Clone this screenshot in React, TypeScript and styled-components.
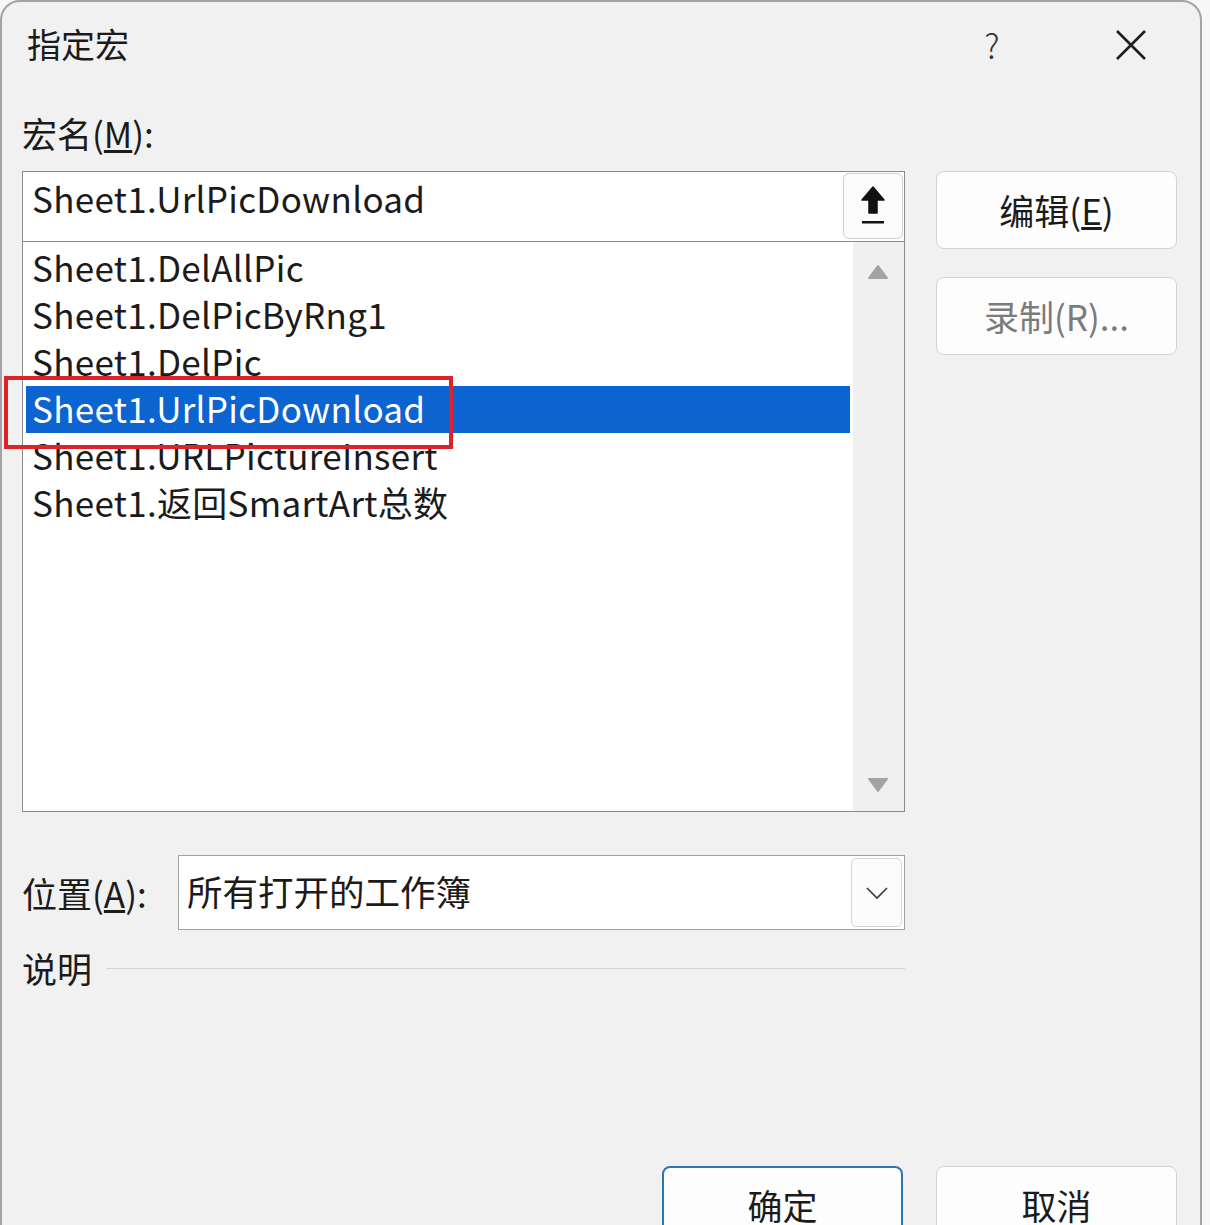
import React from "react";
import styled, { createGlobalStyle } from "styled-components";

const Global = createGlobalStyle`
  html, body { margin: 0; padding: 0; background: #f7f7f7; overflow: hidden; }
  #root { width: 1210px; height: 1225px; overflow: hidden; }
  * { box-sizing: border-box; }
`;

const FONT = `"Noto Sans CJK SC", "Noto Sans", sans-serif`;

const Page = styled.div`
  width: 1210px;
  height: 1225px;
  overflow: hidden;
  background: #f7f7f7;
  font-family: ${FONT};
  color: #1b1b1b;
`;

const Dialog = styled.div`
  position: relative;
  width: 1202px;
  height: 1320px;
  background: #f1f1f1;
  border: 2px solid #a3a3a3;
  border-radius: 20px 20px 0 0;
`;

const TitleBar = styled.div`
  height: 86px;
  display: flex;
  align-items: center;
  padding: 0 53px 0 25px;
`;

const Title = styled.div`
  flex: 1;
  font-size: 34px;
  line-height: 40px;
  margin-top: -2px;
`;

const Help = styled.div`
  font-size: 34px;
  font-weight: 300;
  line-height: 40px;
  width: 20px;
  text-align: center;
  margin-right: 113px;
  color: #333;
`;

const Body = styled.div`
  padding: 27px 23px 0 20px;
`;

const Columns = styled.div`
  display: grid;
  grid-template-columns: 883px 241px;
  column-gap: 31px;
`;

const LeftCol = styled.div`
  display: flex;
  flex-direction: column;
`;

const RightCol = styled.div`
  display: flex;
  flex-direction: column;
  gap: 28px;
  padding-top: 56px;
`;

const Label = styled.div`
  font-size: 35px;
  line-height: 40px;
  height: 40px;
  white-space: nowrap;
`;

const NameLabel = styled(Label)`
  margin-top: -2px;
  margin-bottom: 18px;
`;

const ComboInput = styled.div`
  height: 70px;
  background: #ffffff;
  border: 1px solid #8a8a8a;
  border-bottom: none;
  display: flex;
  align-items: flex-start;
  padding: 1px 1px 0 9px;
`;

const InputText = styled.div`
  flex: 1;
  font-size: 35px;
  letter-spacing: 0.3px;
  line-height: 56px;
  margin-top: -3px;
`;

const UpButton = styled.div`
  width: 60px;
  height: 66px;
  background: #fbfbfb;
  border: 1px solid #cfcfcf;
  border-radius: 6px;
  display: flex;
  align-items: center;
  justify-content: center;
`;

const ListBox = styled.div`
  position: relative;
  height: 571px;
  background: #ffffff;
  border: 1px solid #8a8a8a;
  display: flex;
`;

const Rows = styled.div`
  flex: 1;
  padding: 3px 3px 0 3px;
`;

const Row = styled.div<{ $selected?: boolean }>`
  height: 47px;
  line-height: 43px;
  padding-left: 6px;
  font-size: 35px;
  letter-spacing: 0.3px;
  white-space: nowrap;
  background: ${(p) => (p.$selected ? "#0c64d0" : "transparent")};
  color: ${(p) => (p.$selected ? "#ffffff" : "#1b1b1b")};
`;

const Scrollbar = styled.div`
  width: 51px;
  background: #f0f0f0;
  display: flex;
  flex-direction: column;
  justify-content: space-between;
  align-items: center;
  padding: 22px 1px 18px 0;
`;

const Annotation = styled.div`
  position: absolute;
  left: -19px;
  top: 134px;
  width: 449px;
  height: 73px;
  border: 4px solid #de2229;
  pointer-events: none;
`;

const LocationRow = styled.div`
  margin-top: 43px;
  display: flex;
  align-items: center;
  justify-content: space-between;
`;

const Dropdown = styled.div`
  width: 727px;
  height: 75px;
  background: #ffffff;
  border: 1px solid #a0a0a0;
  display: flex;
  align-items: center;
  padding: 2px 2px 2px 8px;
`;

const DropText = styled.div`
  flex: 1;
  font-size: 35.5px;
  line-height: 40px;
  margin-top: -3px;
`;

const DropButton = styled.div`
  width: 51px;
  height: 69px;
  border: 1px solid #d6d6d6;
  border-radius: 5px;
  background: #fbfbfb;
  display: flex;
  align-items: center;
  justify-content: center;
`;

const DescRow = styled.div`
  margin-top: 18px;
  display: flex;
  align-items: center;
  gap: 14px;
`;

const Rule = styled.div`
  flex: 1;
  height: 1px;
  background: #d4d4d4;
`;

const Button = styled.div<{ $disabled?: boolean; $default?: boolean }>`
  width: 241px;
  height: 78px;
  background: #fdfdfd;
  border: ${(p) => (p.$default ? "2px solid #2f74b5" : "1px solid #d3d3d3")};
  border-radius: 8px;
  display: flex;
  align-items: center;
  justify-content: center;
  font-size: 35px;
  line-height: 40px;
  color: ${(p) => (p.$disabled ? "#7b7b7b" : "#1b1b1b")};
`;

const Footer = styled.div`
  margin-top: 178px;
  display: flex;
  justify-content: flex-end;
  gap: 33px;
`;

const Triangle = ({ down }: { down?: boolean }) => (
  <svg width="22" height="16" viewBox="0 0 22 16">
    <path
      d={down ? "M2 2 L20 2 L11 14 Z" : "M2 14 L20 14 L11 2 Z"}
      fill="#a3a3a3"
      stroke="#a3a3a3"
      strokeWidth="2"
      strokeLinejoin="round"
    />
  </svg>
);

const UpArrowIcon = () => (
  <svg width="26" height="42" viewBox="0 0 26 42">
    <path d="M13 2 L2 15 L9 15 L9 28 L17 28 L17 15 L24 15 Z" fill="#111" stroke="#111" strokeWidth="1.5" strokeLinejoin="round" />
    <rect x="2" y="36" width="22" height="2.5" fill="#111" />
  </svg>
);

const Chevron = () => (
  <svg width="24" height="14" viewBox="0 0 24 14">
    <path d="M2 2 L12 12 L22 2" fill="none" stroke="#3a3a3a" strokeWidth="1.6" />
  </svg>
);

const CloseIcon = () => (
  <svg width="32" height="32" viewBox="0 0 32 32">
    <path d="M2 2 L30 30 M30 2 L2 30" stroke="#1f1f1f" strokeWidth="2.6" />
  </svg>
);

const macros = [
  "Sheet1.DelAllPic",
  "Sheet1.DelPicByRng1",
  "Sheet1.DelPic",
  "Sheet1.UrlPicDownload",
  "Sheet1.URLPictureInsert",
  "Sheet1.返回SmartArt总数",
];

export default function App() {
  return (
    <Page>
      <Global />
      <Dialog>
        <TitleBar>
          <Title>指定宏</Title>
          <Help>?</Help>
          <CloseIcon />
        </TitleBar>
        <Body>
          <Columns>
            <LeftCol>
              <NameLabel>
                宏名(<u>M</u>):
              </NameLabel>
              <ComboInput>
                <InputText>Sheet1.UrlPicDownload</InputText>
                <UpButton>
                  <UpArrowIcon />
                </UpButton>
              </ComboInput>
              <ListBox>
                <Rows>
                  {macros.map((m, i) => (
                    <Row key={m} $selected={i === 3}>
                      {m}
                    </Row>
                  ))}
                </Rows>
                <Scrollbar>
                  <Triangle />
                  <Triangle down />
                </Scrollbar>
                <Annotation />
              </ListBox>
              <LocationRow>
                <Label>
                  位置(<u>A</u>):
                </Label>
                <Dropdown>
                  <DropText>所有打开的工作簿</DropText>
                  <DropButton>
                    <Chevron />
                  </DropButton>
                </Dropdown>
              </LocationRow>
              <DescRow>
                <Label>说明</Label>
                <Rule />
              </DescRow>
            </LeftCol>
            <RightCol>
              <Button>
                编辑(<u>E</u>)
              </Button>
              <Button $disabled>录制(R)...</Button>
            </RightCol>
          </Columns>
          <Footer>
            <Button $default>确定</Button>
            <Button>取消</Button>
          </Footer>
        </Body>
      </Dialog>
    </Page>
  );
}
